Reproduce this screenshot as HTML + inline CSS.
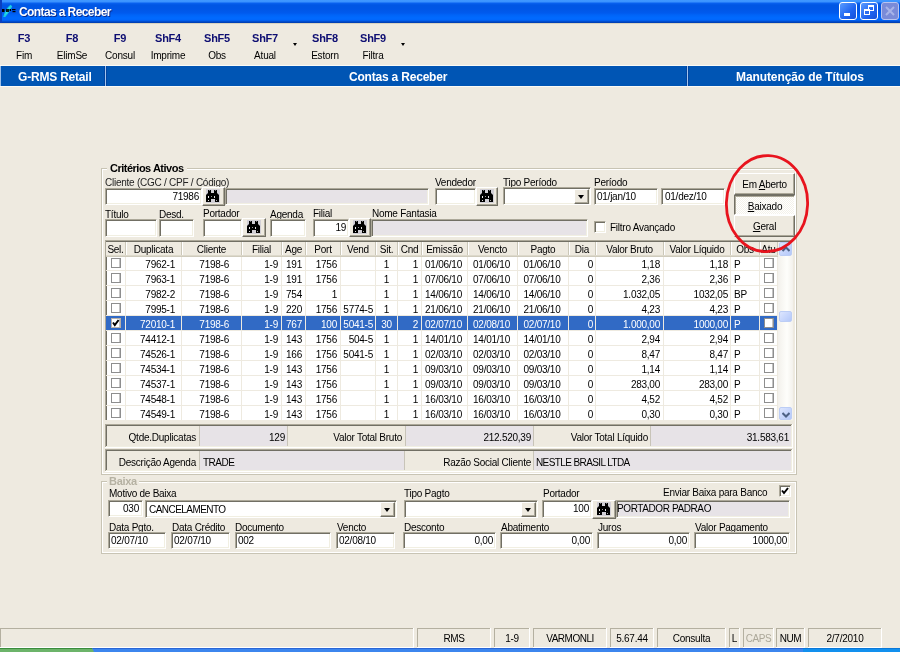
<!DOCTYPE html>
<html><head><meta charset="utf-8"><style>
*{margin:0;padding:0;box-sizing:border-box}
html,body{width:900px;height:652px;overflow:hidden;background:#EEEAE0;font-family:"Liberation Sans",sans-serif;font-size:10px;color:#000;position:relative}
.a{position:absolute}
.t{white-space:nowrap;line-height:12px;letter-spacing:-0.25px}
.sk{border-style:solid;border-width:1px;border-color:#ACA899 #fff #fff #ACA899;box-shadow:inset 1px 1px 0 #716F64,inset -1px -1px 0 #F1EFE2}
.rs{border-style:solid;border-width:1px;border-color:#fff #716F64 #716F64 #fff;box-shadow:inset -1px -1px 0 #ACA899}
.cb{width:10px;height:10px;border:1px solid #8E8E8E;box-shadow:inset -1px 0 0 #C4C4C4}
.arr{width:0;height:0;border-left:3.5px solid transparent;border-right:3.5px solid transparent;border-top:4px solid #000}
.gb{border:1px solid #ACA899;box-shadow:inset 1px 1px 0 #fff,1px 1px 0 #fff}
.g{font-size:10px}
</style></head><body>
<div class="a" style="left:0;top:0;width:900px;height:652px;will-change:transform">
<div class="a" style="left:0;top:0;width:900px;height:23px;background:linear-gradient(#4098FF 0,#3A92FF 2px,#0A62F0 3px,#0056E4 5px,#0056E6 9px,#005AEE 13px,#0064F8 15px,#006AFF 18px,#0066FC 20px,#0056E0 21px,#0044BC 22px,#003CB0 23px)"></div>
<div class="a" style="left:0;top:0;width:2px;height:23px;background:#0A3FC0"></div>
<svg class="a" style="left:0;top:0" width="18" height="20" viewBox="0 0 18 20"><path d="M4 16.5C5 13 7 8 10.5 5.5L11.5 6.5C10 10 7 14 5 16.5z" fill="#30E8F0" stroke="#18C8E0" stroke-width="1.2"/><rect x="2" y="9" width="2.5" height="3" fill="#000"/><path d="M6 9h3v3H6z" fill="#000" opacity="0.85"/><rect x="9.5" y="9" width="1.5" height="2" fill="#000"/><rect x="12" y="9" width="3.5" height="1.2" fill="#000"/><rect x="12.5" y="11" width="3" height="1.2" fill="#000"/></svg>
<div class="a t" style="left:19px;top:6px;font-size:12px;font-weight:bold;color:#fff;letter-spacing:-0.6px;text-shadow:1px 1px 0 #0A2A8A;">Contas a Receber</div>
<div class="a" style="left:839px;top:2px;width:18px;height:18px;border:1px solid #fff;border-radius:3px;background:linear-gradient(135deg,#5A9CFF,#1E64F0 60%,#1650D8)"></div>
<div class="a" style="left:844px;top:13px;width:6px;height:3px;background:#fff;"></div>
<div class="a" style="left:860px;top:2px;width:18px;height:18px;border:1px solid #fff;border-radius:3px;background:linear-gradient(135deg,#5A9CFF,#1E64F0 60%,#1650D8)"></div>
<div class="a" style="left:868px;top:5px;width:6px;height:6px;border:1px solid #fff;border-top-width:2px"></div>
<div class="a" style="left:864px;top:9px;width:6px;height:6px;border:1px solid #fff;border-top-width:2px;background:#2A6CF0"></div>
<div class="a" style="left:881px;top:2px;width:18px;height:18px;border:1px solid #B8C4F0;border-radius:3px;background:#7A8BD8"></div>
<svg class="a" style="left:885px;top:6px" width="10" height="10" viewBox="0 0 10 10"><path d="M1 1L9 9M9 1L1 9" stroke="#A8B4E8" stroke-width="2"/></svg>
<div class="a" style="left:0px;top:23px;width:900px;height:1px;background:#D8D3C0;"></div>
<div class="a t" style="left:-6.0px;width:60px;top:32px;font-size:11px;text-align:center;font-weight:bold;color:#0E0E72;">F3</div>
<div class="a t" style="left:-6.0px;width:60px;top:50px;font-size:10px;text-align:center;letter-spacing:-0.2px;">Fim</div>
<div class="a t" style="left:42.0px;width:60px;top:32px;font-size:11px;text-align:center;font-weight:bold;color:#0E0E72;">F8</div>
<div class="a t" style="left:42.0px;width:60px;top:50px;font-size:10px;text-align:center;letter-spacing:-0.2px;">ElimSe</div>
<div class="a t" style="left:90.0px;width:60px;top:32px;font-size:11px;text-align:center;font-weight:bold;color:#0E0E72;">F9</div>
<div class="a t" style="left:90.0px;width:60px;top:50px;font-size:10px;text-align:center;letter-spacing:-0.2px;">Consul</div>
<div class="a t" style="left:138.0px;width:60px;top:32px;font-size:11px;text-align:center;font-weight:bold;color:#0E0E72;">ShF4</div>
<div class="a t" style="left:138.0px;width:60px;top:50px;font-size:10px;text-align:center;letter-spacing:-0.2px;">Imprime</div>
<div class="a t" style="left:187.0px;width:60px;top:32px;font-size:11px;text-align:center;font-weight:bold;color:#0E0E72;">ShF5</div>
<div class="a t" style="left:187.0px;width:60px;top:50px;font-size:10px;text-align:center;letter-spacing:-0.2px;">Obs</div>
<div class="a t" style="left:235.0px;width:60px;top:32px;font-size:11px;text-align:center;font-weight:bold;color:#0E0E72;">ShF7</div>
<div class="a t" style="left:235.0px;width:60px;top:50px;font-size:10px;text-align:center;letter-spacing:-0.2px;">Atual</div>
<div class="a t" style="left:295.0px;width:60px;top:32px;font-size:11px;text-align:center;font-weight:bold;color:#0E0E72;">ShF8</div>
<div class="a t" style="left:295.0px;width:60px;top:50px;font-size:10px;text-align:center;letter-spacing:-0.2px;">Estorn</div>
<div class="a t" style="left:343.0px;width:60px;top:32px;font-size:11px;text-align:center;font-weight:bold;color:#0E0E72;">ShF9</div>
<div class="a t" style="left:343.0px;width:60px;top:50px;font-size:10px;text-align:center;letter-spacing:-0.2px;">Filtra</div>
<div class="a arr" style="left:292.5px;top:43px;border-left-width:2.5px;border-right-width:2.5px;border-top-width:3px"></div>
<div class="a arr" style="left:400.5px;top:43px;border-left-width:2.5px;border-right-width:2.5px;border-top-width:3px"></div>
<div class="a" style="left:0px;top:65px;width:900px;height:1px;background:#FBFAF5;"></div>
<div class="a" style="left:0px;top:86px;width:900px;height:1px;background:#FBFAF5;"></div>
<div class="a" style="left:0px;top:66px;width:900px;height:20px;background:#0055B4;"></div>
<div class="a" style="left:0px;top:66px;width:1px;height:20px;background:#9CC0EA;"></div>
<div class="a" style="left:104px;top:66px;width:1px;height:20px;background:#0044A0;"></div>
<div class="a" style="left:105px;top:66px;width:1px;height:20px;background:#A4C4EC;"></div>
<div class="a" style="left:106px;top:66px;width:1px;height:20px;background:#0044A0;"></div>
<div class="a" style="left:686px;top:66px;width:1px;height:20px;background:#0044A0;"></div>
<div class="a" style="left:687px;top:66px;width:1px;height:20px;background:#A4C4EC;"></div>
<div class="a" style="left:688px;top:66px;width:1px;height:20px;background:#0044A0;"></div>
<div class="a t" style="left:18px;top:71px;font-size:12px;font-weight:bold;color:#fff;letter-spacing:-0.2px;">G-RMS Retail</div>
<div class="a t" style="left:349px;top:71px;font-size:12px;font-weight:bold;color:#fff;letter-spacing:-0.2px;">Contas a Receber</div>
<div class="a t" style="left:736px;top:71px;font-size:12px;font-weight:bold;color:#fff;letter-spacing:-0.1px;">Manutenção de Títulos</div>
<div class="a" style="left:101px;top:168px;width:696px;height:1px;background:#C8C4B4;"></div>
<div class="a" style="left:102px;top:169px;width:694px;height:1px;background:#fff;"></div>
<div class="a" style="left:101px;top:168px;width:1px;height:307px;background:#C8C4B4;"></div>
<div class="a" style="left:102px;top:169px;width:1px;height:305px;background:#fff;"></div>
<div class="a" style="left:796px;top:168px;width:1px;height:307px;background:#C8C4B4;"></div>
<div class="a" style="left:795px;top:169px;width:1px;height:305px;background:#fff;"></div>
<div class="a" style="left:101px;top:474px;width:696px;height:1px;background:#C8C4B4;"></div>
<div class="a" style="left:102px;top:473px;width:694px;height:1px;background:#fff;"></div>
<div class="a" style="left:107px;top:162px;width:80px;height:10px;background:#EEEAE0;"></div>
<div class="a t" style="left:110px;top:162px;font-size:11px;font-weight:bold;letter-spacing:-0.5px;">Critérios Ativos</div>
<div class="a t" style="left:105px;top:177px;font-size:10px;color:#222;">Cliente (CGC / CPF / Código)</div>
<div class="a t" style="left:435px;top:177px;font-size:10px;">Vendedor</div>
<div class="a t" style="left:503px;top:177px;font-size:10px;">Tipo Período</div>
<div class="a t" style="left:594px;top:177px;font-size:10px;">Período</div>
<div class="a sk" style="left:105px;top:188px;width:97px;height:17px;background:#fff"></div>
<div class="a t" style="right:701px;top:191px;font-size:10px;text-align:right;">71986</div>
<div class="a rs" style="left:202px;top:187px;width:23px;height:19px;background:#EEEAE0;"></div>
<svg class="a" style="left:206px;top:189px" width="14" height="14" viewBox="0 0 14 14">
<rect width="14" height="14" fill="#D2D0D6"/>
<path d="M2 1h3v3h3V1h3v3l2 2v7H9v-3H5v3H0V6l2-2z" fill="#000"/>
<rect x="2" y="7" width="1" height="2" fill="#eee"/><rect x="2" y="11" width="1" height="1" fill="#ddd"/>
<rect x="5" y="7" width="1" height="1" fill="#999"/><rect x="8" y="7" width="1" height="2" fill="#ddd"/><rect x="10" y="11" width="1" height="1" fill="#aaa"/>
<rect x="3" y="1" width="1" height="1" fill="#777"/><rect x="9" y="1" width="1" height="1" fill="#777"/></svg>
<div class="a sk" style="left:225px;top:188px;width:204px;height:17px;background:#E7E3E7"></div>
<div class="a sk" style="left:435px;top:188px;width:41px;height:17px;background:#fff"></div>
<div class="a rs" style="left:476px;top:187px;width:22px;height:19px;background:#EEEAE0;"></div>
<svg class="a" style="left:480px;top:189px" width="14" height="14" viewBox="0 0 14 14">
<rect width="14" height="14" fill="#D2D0D6"/>
<path d="M2 1h3v3h3V1h3v3l2 2v7H9v-3H5v3H0V6l2-2z" fill="#000"/>
<rect x="2" y="7" width="1" height="2" fill="#eee"/><rect x="2" y="11" width="1" height="1" fill="#ddd"/>
<rect x="5" y="7" width="1" height="1" fill="#999"/><rect x="8" y="7" width="1" height="2" fill="#ddd"/><rect x="10" y="11" width="1" height="1" fill="#aaa"/>
<rect x="3" y="1" width="1" height="1" fill="#777"/><rect x="9" y="1" width="1" height="1" fill="#777"/></svg>
<div class="a sk" style="left:503px;top:187px;width:88px;height:18px;background:#fff"></div>
<div class="a rs" style="left:574px;top:189px;width:15px;height:15px;background:#EEEAE0;"></div>
<div class="a arr" style="left:577.5px;top:195px"></div>
<div class="a sk" style="left:594px;top:188px;width:64px;height:17px;background:#fff"></div>
<div class="a t" style="left:597px;top:191px;font-size:10px;">01/jan/10</div>
<div class="a sk" style="left:661px;top:188px;width:64px;height:17px;background:#fff"></div>
<div class="a t" style="left:665px;top:191px;font-size:10px;">01/dez/10</div>
<div class="a t" style="left:105px;top:209px;font-size:10px;">Título</div>
<div class="a t" style="left:159px;top:209px;font-size:10px;">Desd.</div>
<div class="a t" style="left:203px;top:208px;font-size:10px;">Portador</div>
<div class="a t" style="left:270px;top:209px;font-size:10px;">Agenda</div>
<div class="a t" style="left:313px;top:208px;font-size:10px;">Filial</div>
<div class="a t" style="left:372px;top:208px;font-size:10px;">Nome Fantasia</div>
<div class="a sk" style="left:105px;top:219px;width:52px;height:18px;background:#fff"></div>
<div class="a sk" style="left:159px;top:219px;width:35px;height:18px;background:#fff"></div>
<div class="a sk" style="left:203px;top:219px;width:39px;height:18px;background:#fff"></div>
<div class="a rs" style="left:242px;top:218px;width:24px;height:19px;background:#EEEAE0;"></div>
<svg class="a" style="left:247px;top:220px" width="14" height="14" viewBox="0 0 14 14">
<rect width="14" height="14" fill="#D2D0D6"/>
<path d="M2 1h3v3h3V1h3v3l2 2v7H9v-3H5v3H0V6l2-2z" fill="#000"/>
<rect x="2" y="7" width="1" height="2" fill="#eee"/><rect x="2" y="11" width="1" height="1" fill="#ddd"/>
<rect x="5" y="7" width="1" height="1" fill="#999"/><rect x="8" y="7" width="1" height="2" fill="#ddd"/><rect x="10" y="11" width="1" height="1" fill="#aaa"/>
<rect x="3" y="1" width="1" height="1" fill="#777"/><rect x="9" y="1" width="1" height="1" fill="#777"/></svg>
<div class="a sk" style="left:270px;top:219px;width:36px;height:18px;background:#fff"></div>
<div class="a sk" style="left:313px;top:219px;width:36px;height:18px;background:#fff"></div>
<div class="a t" style="right:554px;top:222px;font-size:10px;text-align:right;">19</div>
<div class="a rs" style="left:349px;top:218px;width:22px;height:19px;background:#EEEAE0;"></div>
<svg class="a" style="left:353px;top:220px" width="14" height="14" viewBox="0 0 14 14">
<rect width="14" height="14" fill="#D2D0D6"/>
<path d="M2 1h3v3h3V1h3v3l2 2v7H9v-3H5v3H0V6l2-2z" fill="#000"/>
<rect x="2" y="7" width="1" height="2" fill="#eee"/><rect x="2" y="11" width="1" height="1" fill="#ddd"/>
<rect x="5" y="7" width="1" height="1" fill="#999"/><rect x="8" y="7" width="1" height="2" fill="#ddd"/><rect x="10" y="11" width="1" height="1" fill="#aaa"/>
<rect x="3" y="1" width="1" height="1" fill="#777"/><rect x="9" y="1" width="1" height="1" fill="#777"/></svg>
<div class="a sk" style="left:371px;top:219px;width:217px;height:18px;background:#E7E3E7"></div>
<div class="a sk" style="left:594px;top:221px;width:12px;height:12px;background:#fff"></div>
<div class="a t" style="left:610px;top:222px;font-size:10px;">Filtro Avançado</div>
<div class="a rs" style="left:734px;top:173px;width:61px;height:22px;background:#EEEAE0;"></div>
<div class="a t" style="left:734.5px;width:60px;top:179px;font-size:10px;text-align:center;">Em <u>A</u>berto</div>
<div class="a" style="left:734px;top:195px;width:61px;height:20px;border-style:solid;border-width:1px;border-color:#716F64 #fff #fff #716F64;box-shadow:inset 1px 1px 0 #ACA899;background:repeating-conic-gradient(#F4F2EA 0 25%,#fff 0 50%) 0 0/2px 2px"></div>
<div class="a t" style="left:735.0px;width:60px;top:201px;font-size:10px;text-align:center;"><u>B</u>aixado</div>
<div class="a rs" style="left:734px;top:215px;width:61px;height:22px;background:#EEEAE0;"></div>
<div class="a t" style="left:734.5px;width:60px;top:221px;font-size:10px;text-align:center;"><u>G</u>eral</div>
<div class="a" style="left:105px;top:240px;width:688px;height:181px;background:#fff;"></div>
<div class="a" style="left:105px;top:240px;width:688px;height:1px;background:#ACA899;"></div>
<div class="a" style="left:105px;top:240px;width:1px;height:181px;background:#ACA899;"></div>
<div class="a" style="left:106px;top:241px;width:687px;height:1px;background:#716F64;"></div>
<div class="a" style="left:106px;top:241px;width:1px;height:180px;background:#716F64;"></div>
<div class="a" style="left:105px;top:420px;width:688px;height:1px;background:#F1EFE2;"></div>
<div class="a" style="left:792px;top:240px;width:1px;height:181px;background:#F1EFE2;"></div>
<div class="a" style="left:106px;top:242px;width:672px;height:14px;background:#EEEAE0;"></div>
<div class="a" style="left:125px;top:242px;width:1px;height:14px;background:#CBC7B8;"></div>
<div class="a t" style="left:96.0px;width:39px;top:244px;font-size:10px;text-align:center;">Sel.</div>
<div class="a" style="left:181px;top:242px;width:1px;height:14px;background:#CBC7B8;"></div>
<div class="a" style="left:126px;top:242px;width:1px;height:14px;background:#FFFFFF;"></div>
<div class="a t" style="left:116.0px;width:75px;top:244px;font-size:10px;text-align:center;">Duplicata</div>
<div class="a" style="left:241px;top:242px;width:1px;height:14px;background:#CBC7B8;"></div>
<div class="a" style="left:182px;top:242px;width:1px;height:14px;background:#FFFFFF;"></div>
<div class="a t" style="left:172.0px;width:79px;top:244px;font-size:10px;text-align:center;">Cliente</div>
<div class="a" style="left:281px;top:242px;width:1px;height:14px;background:#CBC7B8;"></div>
<div class="a" style="left:242px;top:242px;width:1px;height:14px;background:#FFFFFF;"></div>
<div class="a t" style="left:232.0px;width:59px;top:244px;font-size:10px;text-align:center;">Filial</div>
<div class="a" style="left:305px;top:242px;width:1px;height:14px;background:#CBC7B8;"></div>
<div class="a" style="left:282px;top:242px;width:1px;height:14px;background:#FFFFFF;"></div>
<div class="a t" style="left:272.0px;width:43px;top:244px;font-size:10px;text-align:center;">Age</div>
<div class="a" style="left:340px;top:242px;width:1px;height:14px;background:#CBC7B8;"></div>
<div class="a" style="left:306px;top:242px;width:1px;height:14px;background:#FFFFFF;"></div>
<div class="a t" style="left:296.0px;width:54px;top:244px;font-size:10px;text-align:center;">Port</div>
<div class="a" style="left:375px;top:242px;width:1px;height:14px;background:#CBC7B8;"></div>
<div class="a" style="left:341px;top:242px;width:1px;height:14px;background:#FFFFFF;"></div>
<div class="a t" style="left:331.0px;width:54px;top:244px;font-size:10px;text-align:center;">Vend</div>
<div class="a" style="left:397px;top:242px;width:1px;height:14px;background:#CBC7B8;"></div>
<div class="a" style="left:376px;top:242px;width:1px;height:14px;background:#FFFFFF;"></div>
<div class="a t" style="left:366.0px;width:41px;top:244px;font-size:10px;text-align:center;">Sit.</div>
<div class="a" style="left:421px;top:242px;width:1px;height:14px;background:#CBC7B8;"></div>
<div class="a" style="left:398px;top:242px;width:1px;height:14px;background:#FFFFFF;"></div>
<div class="a t" style="left:388.0px;width:43px;top:244px;font-size:10px;text-align:center;">Cnd</div>
<div class="a" style="left:467px;top:242px;width:1px;height:14px;background:#CBC7B8;"></div>
<div class="a" style="left:422px;top:242px;width:1px;height:14px;background:#FFFFFF;"></div>
<div class="a t" style="left:412.0px;width:65px;top:244px;font-size:10px;text-align:center;">Emissão</div>
<div class="a" style="left:517px;top:242px;width:1px;height:14px;background:#CBC7B8;"></div>
<div class="a" style="left:468px;top:242px;width:1px;height:14px;background:#FFFFFF;"></div>
<div class="a t" style="left:458.0px;width:69px;top:244px;font-size:10px;text-align:center;">Vencto</div>
<div class="a" style="left:568px;top:242px;width:1px;height:14px;background:#CBC7B8;"></div>
<div class="a" style="left:518px;top:242px;width:1px;height:14px;background:#FFFFFF;"></div>
<div class="a t" style="left:508.0px;width:70px;top:244px;font-size:10px;text-align:center;">Pagto</div>
<div class="a" style="left:595px;top:242px;width:1px;height:14px;background:#CBC7B8;"></div>
<div class="a" style="left:569px;top:242px;width:1px;height:14px;background:#FFFFFF;"></div>
<div class="a t" style="left:559.0px;width:46px;top:244px;font-size:10px;text-align:center;">Dia</div>
<div class="a" style="left:663px;top:242px;width:1px;height:14px;background:#CBC7B8;"></div>
<div class="a" style="left:596px;top:242px;width:1px;height:14px;background:#FFFFFF;"></div>
<div class="a t" style="left:586.0px;width:87px;top:244px;font-size:10px;text-align:center;">Valor Bruto</div>
<div class="a" style="left:730px;top:242px;width:1px;height:14px;background:#CBC7B8;"></div>
<div class="a" style="left:664px;top:242px;width:1px;height:14px;background:#FFFFFF;"></div>
<div class="a t" style="left:654.0px;width:86px;top:244px;font-size:10px;text-align:center;">Valor Líquido</div>
<div class="a" style="left:759px;top:242px;width:1px;height:14px;background:#CBC7B8;"></div>
<div class="a" style="left:731px;top:242px;width:1px;height:14px;background:#FFFFFF;"></div>
<div class="a t" style="left:721.0px;width:48px;top:244px;font-size:10px;text-align:center;">Obs</div>
<div class="a" style="left:777px;top:242px;width:1px;height:14px;background:#CBC7B8;"></div>
<div class="a" style="left:760px;top:242px;width:1px;height:14px;background:#FFFFFF;"></div>
<div class="a t" style="left:750.0px;width:37px;top:244px;font-size:10px;text-align:center;">Atu</div>
<div class="a" style="left:106px;top:255px;width:672px;height:1px;background:#DDD9CB;"></div>
<div class="a" style="left:106px;top:270px;width:672px;height:1px;background:#EEEAE0;"></div>
<div class="a" style="left:125px;top:256px;width:1px;height:15px;background:#EEEAE0;"></div>
<div class="a" style="left:181px;top:256px;width:1px;height:15px;background:#EEEAE0;"></div>
<div class="a" style="left:241px;top:256px;width:1px;height:15px;background:#EEEAE0;"></div>
<div class="a" style="left:281px;top:256px;width:1px;height:15px;background:#EEEAE0;"></div>
<div class="a" style="left:305px;top:256px;width:1px;height:15px;background:#EEEAE0;"></div>
<div class="a" style="left:340px;top:256px;width:1px;height:15px;background:#EEEAE0;"></div>
<div class="a" style="left:375px;top:256px;width:1px;height:15px;background:#EEEAE0;"></div>
<div class="a" style="left:397px;top:256px;width:1px;height:15px;background:#EEEAE0;"></div>
<div class="a" style="left:421px;top:256px;width:1px;height:15px;background:#EEEAE0;"></div>
<div class="a" style="left:467px;top:256px;width:1px;height:15px;background:#EEEAE0;"></div>
<div class="a" style="left:517px;top:256px;width:1px;height:15px;background:#EEEAE0;"></div>
<div class="a" style="left:568px;top:256px;width:1px;height:15px;background:#EEEAE0;"></div>
<div class="a" style="left:595px;top:256px;width:1px;height:15px;background:#EEEAE0;"></div>
<div class="a" style="left:663px;top:256px;width:1px;height:15px;background:#EEEAE0;"></div>
<div class="a" style="left:730px;top:256px;width:1px;height:15px;background:#EEEAE0;"></div>
<div class="a" style="left:759px;top:256px;width:1px;height:15px;background:#EEEAE0;"></div>
<div class="a" style="left:777px;top:256px;width:1px;height:15px;background:#EEEAE0;"></div>
<div class="a cb" style="left:111px;top:258px;background:#fff;border-color:#8E8E8E"></div>
<div class="a cb" style="left:764px;top:258px;background:#fff;border-color:#8E8E8E"></div>
<div class="a t" style="right:725px;top:259px;font-size:10px;text-align:right;color:#000;">7962-1</div>
<div class="a t" style="right:671px;top:259px;font-size:10px;text-align:right;color:#000;">7198-6</div>
<div class="a t" style="right:622px;top:259px;font-size:10px;text-align:right;color:#000;">1-9</div>
<div class="a t" style="right:598px;top:259px;font-size:10px;text-align:right;color:#000;">191</div>
<div class="a t" style="right:563px;top:259px;font-size:10px;text-align:right;color:#000;">1756</div>
<div class="a t" style="left:356.5px;width:60px;top:259px;font-size:10px;text-align:center;color:#000;">1</div>
<div class="a t" style="right:482px;top:259px;font-size:10px;text-align:right;color:#000;">1</div>
<div class="a t" style="left:413.5px;width:60px;top:259px;font-size:10px;text-align:center;color:#000;">01/06/10</div>
<div class="a t" style="left:461.5px;width:60px;top:259px;font-size:10px;text-align:center;color:#000;">01/06/10</div>
<div class="a t" style="left:512.0px;width:60px;top:259px;font-size:10px;text-align:center;color:#000;">01/06/10</div>
<div class="a t" style="right:307px;top:259px;font-size:10px;text-align:right;color:#000;">0</div>
<div class="a t" style="right:240px;top:259px;font-size:10px;text-align:right;color:#000;">1,18</div>
<div class="a t" style="right:172px;top:259px;font-size:10px;text-align:right;color:#000;">1,18</div>
<div class="a t" style="left:734px;top:259px;font-size:10px;color:#000;">P</div>
<div class="a" style="left:106px;top:285px;width:672px;height:1px;background:#EEEAE0;"></div>
<div class="a" style="left:125px;top:271px;width:1px;height:15px;background:#EEEAE0;"></div>
<div class="a" style="left:181px;top:271px;width:1px;height:15px;background:#EEEAE0;"></div>
<div class="a" style="left:241px;top:271px;width:1px;height:15px;background:#EEEAE0;"></div>
<div class="a" style="left:281px;top:271px;width:1px;height:15px;background:#EEEAE0;"></div>
<div class="a" style="left:305px;top:271px;width:1px;height:15px;background:#EEEAE0;"></div>
<div class="a" style="left:340px;top:271px;width:1px;height:15px;background:#EEEAE0;"></div>
<div class="a" style="left:375px;top:271px;width:1px;height:15px;background:#EEEAE0;"></div>
<div class="a" style="left:397px;top:271px;width:1px;height:15px;background:#EEEAE0;"></div>
<div class="a" style="left:421px;top:271px;width:1px;height:15px;background:#EEEAE0;"></div>
<div class="a" style="left:467px;top:271px;width:1px;height:15px;background:#EEEAE0;"></div>
<div class="a" style="left:517px;top:271px;width:1px;height:15px;background:#EEEAE0;"></div>
<div class="a" style="left:568px;top:271px;width:1px;height:15px;background:#EEEAE0;"></div>
<div class="a" style="left:595px;top:271px;width:1px;height:15px;background:#EEEAE0;"></div>
<div class="a" style="left:663px;top:271px;width:1px;height:15px;background:#EEEAE0;"></div>
<div class="a" style="left:730px;top:271px;width:1px;height:15px;background:#EEEAE0;"></div>
<div class="a" style="left:759px;top:271px;width:1px;height:15px;background:#EEEAE0;"></div>
<div class="a" style="left:777px;top:271px;width:1px;height:15px;background:#EEEAE0;"></div>
<div class="a cb" style="left:111px;top:273px;background:#fff;border-color:#8E8E8E"></div>
<div class="a cb" style="left:764px;top:273px;background:#fff;border-color:#8E8E8E"></div>
<div class="a t" style="right:725px;top:274px;font-size:10px;text-align:right;color:#000;">7963-1</div>
<div class="a t" style="right:671px;top:274px;font-size:10px;text-align:right;color:#000;">7198-6</div>
<div class="a t" style="right:622px;top:274px;font-size:10px;text-align:right;color:#000;">1-9</div>
<div class="a t" style="right:598px;top:274px;font-size:10px;text-align:right;color:#000;">191</div>
<div class="a t" style="right:563px;top:274px;font-size:10px;text-align:right;color:#000;">1756</div>
<div class="a t" style="left:356.5px;width:60px;top:274px;font-size:10px;text-align:center;color:#000;">1</div>
<div class="a t" style="right:482px;top:274px;font-size:10px;text-align:right;color:#000;">1</div>
<div class="a t" style="left:413.5px;width:60px;top:274px;font-size:10px;text-align:center;color:#000;">07/06/10</div>
<div class="a t" style="left:461.5px;width:60px;top:274px;font-size:10px;text-align:center;color:#000;">07/06/10</div>
<div class="a t" style="left:512.0px;width:60px;top:274px;font-size:10px;text-align:center;color:#000;">07/06/10</div>
<div class="a t" style="right:307px;top:274px;font-size:10px;text-align:right;color:#000;">0</div>
<div class="a t" style="right:240px;top:274px;font-size:10px;text-align:right;color:#000;">2,36</div>
<div class="a t" style="right:172px;top:274px;font-size:10px;text-align:right;color:#000;">2,36</div>
<div class="a t" style="left:734px;top:274px;font-size:10px;color:#000;">P</div>
<div class="a" style="left:106px;top:300px;width:672px;height:1px;background:#EEEAE0;"></div>
<div class="a" style="left:125px;top:286px;width:1px;height:15px;background:#EEEAE0;"></div>
<div class="a" style="left:181px;top:286px;width:1px;height:15px;background:#EEEAE0;"></div>
<div class="a" style="left:241px;top:286px;width:1px;height:15px;background:#EEEAE0;"></div>
<div class="a" style="left:281px;top:286px;width:1px;height:15px;background:#EEEAE0;"></div>
<div class="a" style="left:305px;top:286px;width:1px;height:15px;background:#EEEAE0;"></div>
<div class="a" style="left:340px;top:286px;width:1px;height:15px;background:#EEEAE0;"></div>
<div class="a" style="left:375px;top:286px;width:1px;height:15px;background:#EEEAE0;"></div>
<div class="a" style="left:397px;top:286px;width:1px;height:15px;background:#EEEAE0;"></div>
<div class="a" style="left:421px;top:286px;width:1px;height:15px;background:#EEEAE0;"></div>
<div class="a" style="left:467px;top:286px;width:1px;height:15px;background:#EEEAE0;"></div>
<div class="a" style="left:517px;top:286px;width:1px;height:15px;background:#EEEAE0;"></div>
<div class="a" style="left:568px;top:286px;width:1px;height:15px;background:#EEEAE0;"></div>
<div class="a" style="left:595px;top:286px;width:1px;height:15px;background:#EEEAE0;"></div>
<div class="a" style="left:663px;top:286px;width:1px;height:15px;background:#EEEAE0;"></div>
<div class="a" style="left:730px;top:286px;width:1px;height:15px;background:#EEEAE0;"></div>
<div class="a" style="left:759px;top:286px;width:1px;height:15px;background:#EEEAE0;"></div>
<div class="a" style="left:777px;top:286px;width:1px;height:15px;background:#EEEAE0;"></div>
<div class="a cb" style="left:111px;top:288px;background:#fff;border-color:#8E8E8E"></div>
<div class="a cb" style="left:764px;top:288px;background:#fff;border-color:#8E8E8E"></div>
<div class="a t" style="right:725px;top:289px;font-size:10px;text-align:right;color:#000;">7982-2</div>
<div class="a t" style="right:671px;top:289px;font-size:10px;text-align:right;color:#000;">7198-6</div>
<div class="a t" style="right:622px;top:289px;font-size:10px;text-align:right;color:#000;">1-9</div>
<div class="a t" style="right:598px;top:289px;font-size:10px;text-align:right;color:#000;">754</div>
<div class="a t" style="right:563px;top:289px;font-size:10px;text-align:right;color:#000;">1</div>
<div class="a t" style="left:356.5px;width:60px;top:289px;font-size:10px;text-align:center;color:#000;">1</div>
<div class="a t" style="right:482px;top:289px;font-size:10px;text-align:right;color:#000;">1</div>
<div class="a t" style="left:413.5px;width:60px;top:289px;font-size:10px;text-align:center;color:#000;">14/06/10</div>
<div class="a t" style="left:461.5px;width:60px;top:289px;font-size:10px;text-align:center;color:#000;">14/06/10</div>
<div class="a t" style="left:512.0px;width:60px;top:289px;font-size:10px;text-align:center;color:#000;">14/06/10</div>
<div class="a t" style="right:307px;top:289px;font-size:10px;text-align:right;color:#000;">0</div>
<div class="a t" style="right:240px;top:289px;font-size:10px;text-align:right;color:#000;">1.032,05</div>
<div class="a t" style="right:172px;top:289px;font-size:10px;text-align:right;color:#000;">1032,05</div>
<div class="a t" style="left:734px;top:289px;font-size:10px;color:#000;">BP</div>
<div class="a" style="left:106px;top:315px;width:672px;height:1px;background:#EEEAE0;"></div>
<div class="a" style="left:125px;top:301px;width:1px;height:15px;background:#EEEAE0;"></div>
<div class="a" style="left:181px;top:301px;width:1px;height:15px;background:#EEEAE0;"></div>
<div class="a" style="left:241px;top:301px;width:1px;height:15px;background:#EEEAE0;"></div>
<div class="a" style="left:281px;top:301px;width:1px;height:15px;background:#EEEAE0;"></div>
<div class="a" style="left:305px;top:301px;width:1px;height:15px;background:#EEEAE0;"></div>
<div class="a" style="left:340px;top:301px;width:1px;height:15px;background:#EEEAE0;"></div>
<div class="a" style="left:375px;top:301px;width:1px;height:15px;background:#EEEAE0;"></div>
<div class="a" style="left:397px;top:301px;width:1px;height:15px;background:#EEEAE0;"></div>
<div class="a" style="left:421px;top:301px;width:1px;height:15px;background:#EEEAE0;"></div>
<div class="a" style="left:467px;top:301px;width:1px;height:15px;background:#EEEAE0;"></div>
<div class="a" style="left:517px;top:301px;width:1px;height:15px;background:#EEEAE0;"></div>
<div class="a" style="left:568px;top:301px;width:1px;height:15px;background:#EEEAE0;"></div>
<div class="a" style="left:595px;top:301px;width:1px;height:15px;background:#EEEAE0;"></div>
<div class="a" style="left:663px;top:301px;width:1px;height:15px;background:#EEEAE0;"></div>
<div class="a" style="left:730px;top:301px;width:1px;height:15px;background:#EEEAE0;"></div>
<div class="a" style="left:759px;top:301px;width:1px;height:15px;background:#EEEAE0;"></div>
<div class="a" style="left:777px;top:301px;width:1px;height:15px;background:#EEEAE0;"></div>
<div class="a cb" style="left:111px;top:303px;background:#fff;border-color:#8E8E8E"></div>
<div class="a cb" style="left:764px;top:303px;background:#fff;border-color:#8E8E8E"></div>
<div class="a t" style="right:725px;top:304px;font-size:10px;text-align:right;color:#000;">7995-1</div>
<div class="a t" style="right:671px;top:304px;font-size:10px;text-align:right;color:#000;">7198-6</div>
<div class="a t" style="right:622px;top:304px;font-size:10px;text-align:right;color:#000;">1-9</div>
<div class="a t" style="right:598px;top:304px;font-size:10px;text-align:right;color:#000;">220</div>
<div class="a t" style="right:563px;top:304px;font-size:10px;text-align:right;color:#000;">1756</div>
<div class="a t" style="right:527px;top:304px;font-size:10px;text-align:right;color:#000;">5774-5</div>
<div class="a t" style="left:356.5px;width:60px;top:304px;font-size:10px;text-align:center;color:#000;">1</div>
<div class="a t" style="right:482px;top:304px;font-size:10px;text-align:right;color:#000;">1</div>
<div class="a t" style="left:413.5px;width:60px;top:304px;font-size:10px;text-align:center;color:#000;">21/06/10</div>
<div class="a t" style="left:461.5px;width:60px;top:304px;font-size:10px;text-align:center;color:#000;">21/06/10</div>
<div class="a t" style="left:512.0px;width:60px;top:304px;font-size:10px;text-align:center;color:#000;">21/06/10</div>
<div class="a t" style="right:307px;top:304px;font-size:10px;text-align:right;color:#000;">0</div>
<div class="a t" style="right:240px;top:304px;font-size:10px;text-align:right;color:#000;">4,23</div>
<div class="a t" style="right:172px;top:304px;font-size:10px;text-align:right;color:#000;">4,23</div>
<div class="a t" style="left:734px;top:304px;font-size:10px;color:#000;">P</div>
<div class="a" style="left:106px;top:316px;width:19px;height:14px;background:#316AC5;"></div>
<div class="a" style="left:126px;top:316px;width:652px;height:14px;background:#316AC5;"></div>
<div class="a" style="left:106px;top:330px;width:672px;height:1px;background:#EEEAE0;"></div>
<div class="a" style="left:125px;top:316px;width:1px;height:15px;background:#EEEAE0;"></div>
<div class="a" style="left:181px;top:316px;width:1px;height:15px;background:#EEEAE0;"></div>
<div class="a" style="left:241px;top:316px;width:1px;height:15px;background:#EEEAE0;"></div>
<div class="a" style="left:281px;top:316px;width:1px;height:15px;background:#EEEAE0;"></div>
<div class="a" style="left:305px;top:316px;width:1px;height:15px;background:#EEEAE0;"></div>
<div class="a" style="left:340px;top:316px;width:1px;height:15px;background:#EEEAE0;"></div>
<div class="a" style="left:375px;top:316px;width:1px;height:15px;background:#EEEAE0;"></div>
<div class="a" style="left:397px;top:316px;width:1px;height:15px;background:#EEEAE0;"></div>
<div class="a" style="left:421px;top:316px;width:1px;height:15px;background:#EEEAE0;"></div>
<div class="a" style="left:467px;top:316px;width:1px;height:15px;background:#EEEAE0;"></div>
<div class="a" style="left:517px;top:316px;width:1px;height:15px;background:#EEEAE0;"></div>
<div class="a" style="left:568px;top:316px;width:1px;height:15px;background:#EEEAE0;"></div>
<div class="a" style="left:595px;top:316px;width:1px;height:15px;background:#EEEAE0;"></div>
<div class="a" style="left:663px;top:316px;width:1px;height:15px;background:#EEEAE0;"></div>
<div class="a" style="left:730px;top:316px;width:1px;height:15px;background:#EEEAE0;"></div>
<div class="a" style="left:759px;top:316px;width:1px;height:15px;background:#EEEAE0;"></div>
<div class="a" style="left:777px;top:316px;width:1px;height:15px;background:#EEEAE0;"></div>
<div class="a cb" style="left:111px;top:318px;background:#fff;border-color:#B8B0A8"></div>
<svg class="a" style="left:111px;top:318px" width="10" height="10" viewBox="0 0 10 10"><path d="M2 4.5L3.8 7 7.6 2" stroke="#000" stroke-width="2" fill="none"/></svg>
<div class="a cb" style="left:764px;top:318px;background:#fff;border-color:#8E8E8E"></div>
<div class="a t" style="right:725px;top:319px;font-size:10px;text-align:right;color:#fff;">72010-1</div>
<div class="a t" style="right:671px;top:319px;font-size:10px;text-align:right;color:#fff;">7198-6</div>
<div class="a t" style="right:622px;top:319px;font-size:10px;text-align:right;color:#fff;">1-9</div>
<div class="a t" style="right:598px;top:319px;font-size:10px;text-align:right;color:#fff;">767</div>
<div class="a t" style="right:563px;top:319px;font-size:10px;text-align:right;color:#fff;">100</div>
<div class="a t" style="right:527px;top:319px;font-size:10px;text-align:right;color:#fff;">5041-5</div>
<div class="a t" style="left:356.5px;width:60px;top:319px;font-size:10px;text-align:center;color:#fff;">30</div>
<div class="a t" style="right:482px;top:319px;font-size:10px;text-align:right;color:#fff;">2</div>
<div class="a t" style="left:413.5px;width:60px;top:319px;font-size:10px;text-align:center;color:#fff;">02/07/10</div>
<div class="a t" style="left:461.5px;width:60px;top:319px;font-size:10px;text-align:center;color:#fff;">02/08/10</div>
<div class="a t" style="left:512.0px;width:60px;top:319px;font-size:10px;text-align:center;color:#fff;">02/07/10</div>
<div class="a t" style="right:307px;top:319px;font-size:10px;text-align:right;color:#fff;">0</div>
<div class="a t" style="right:240px;top:319px;font-size:10px;text-align:right;color:#fff;">1.000,00</div>
<div class="a t" style="right:172px;top:319px;font-size:10px;text-align:right;color:#fff;">1000,00</div>
<div class="a t" style="left:734px;top:319px;font-size:10px;color:#fff;">P</div>
<div class="a" style="left:106px;top:345px;width:672px;height:1px;background:#EEEAE0;"></div>
<div class="a" style="left:125px;top:331px;width:1px;height:15px;background:#EEEAE0;"></div>
<div class="a" style="left:181px;top:331px;width:1px;height:15px;background:#EEEAE0;"></div>
<div class="a" style="left:241px;top:331px;width:1px;height:15px;background:#EEEAE0;"></div>
<div class="a" style="left:281px;top:331px;width:1px;height:15px;background:#EEEAE0;"></div>
<div class="a" style="left:305px;top:331px;width:1px;height:15px;background:#EEEAE0;"></div>
<div class="a" style="left:340px;top:331px;width:1px;height:15px;background:#EEEAE0;"></div>
<div class="a" style="left:375px;top:331px;width:1px;height:15px;background:#EEEAE0;"></div>
<div class="a" style="left:397px;top:331px;width:1px;height:15px;background:#EEEAE0;"></div>
<div class="a" style="left:421px;top:331px;width:1px;height:15px;background:#EEEAE0;"></div>
<div class="a" style="left:467px;top:331px;width:1px;height:15px;background:#EEEAE0;"></div>
<div class="a" style="left:517px;top:331px;width:1px;height:15px;background:#EEEAE0;"></div>
<div class="a" style="left:568px;top:331px;width:1px;height:15px;background:#EEEAE0;"></div>
<div class="a" style="left:595px;top:331px;width:1px;height:15px;background:#EEEAE0;"></div>
<div class="a" style="left:663px;top:331px;width:1px;height:15px;background:#EEEAE0;"></div>
<div class="a" style="left:730px;top:331px;width:1px;height:15px;background:#EEEAE0;"></div>
<div class="a" style="left:759px;top:331px;width:1px;height:15px;background:#EEEAE0;"></div>
<div class="a" style="left:777px;top:331px;width:1px;height:15px;background:#EEEAE0;"></div>
<div class="a cb" style="left:111px;top:333px;background:#fff;border-color:#8E8E8E"></div>
<div class="a cb" style="left:764px;top:333px;background:#fff;border-color:#8E8E8E"></div>
<div class="a t" style="right:725px;top:334px;font-size:10px;text-align:right;color:#000;">74412-1</div>
<div class="a t" style="right:671px;top:334px;font-size:10px;text-align:right;color:#000;">7198-6</div>
<div class="a t" style="right:622px;top:334px;font-size:10px;text-align:right;color:#000;">1-9</div>
<div class="a t" style="right:598px;top:334px;font-size:10px;text-align:right;color:#000;">143</div>
<div class="a t" style="right:563px;top:334px;font-size:10px;text-align:right;color:#000;">1756</div>
<div class="a t" style="right:527px;top:334px;font-size:10px;text-align:right;color:#000;">504-5</div>
<div class="a t" style="left:356.5px;width:60px;top:334px;font-size:10px;text-align:center;color:#000;">1</div>
<div class="a t" style="right:482px;top:334px;font-size:10px;text-align:right;color:#000;">1</div>
<div class="a t" style="left:413.5px;width:60px;top:334px;font-size:10px;text-align:center;color:#000;">14/01/10</div>
<div class="a t" style="left:461.5px;width:60px;top:334px;font-size:10px;text-align:center;color:#000;">14/01/10</div>
<div class="a t" style="left:512.0px;width:60px;top:334px;font-size:10px;text-align:center;color:#000;">14/01/10</div>
<div class="a t" style="right:307px;top:334px;font-size:10px;text-align:right;color:#000;">0</div>
<div class="a t" style="right:240px;top:334px;font-size:10px;text-align:right;color:#000;">2,94</div>
<div class="a t" style="right:172px;top:334px;font-size:10px;text-align:right;color:#000;">2,94</div>
<div class="a t" style="left:734px;top:334px;font-size:10px;color:#000;">P</div>
<div class="a" style="left:106px;top:360px;width:672px;height:1px;background:#EEEAE0;"></div>
<div class="a" style="left:125px;top:346px;width:1px;height:15px;background:#EEEAE0;"></div>
<div class="a" style="left:181px;top:346px;width:1px;height:15px;background:#EEEAE0;"></div>
<div class="a" style="left:241px;top:346px;width:1px;height:15px;background:#EEEAE0;"></div>
<div class="a" style="left:281px;top:346px;width:1px;height:15px;background:#EEEAE0;"></div>
<div class="a" style="left:305px;top:346px;width:1px;height:15px;background:#EEEAE0;"></div>
<div class="a" style="left:340px;top:346px;width:1px;height:15px;background:#EEEAE0;"></div>
<div class="a" style="left:375px;top:346px;width:1px;height:15px;background:#EEEAE0;"></div>
<div class="a" style="left:397px;top:346px;width:1px;height:15px;background:#EEEAE0;"></div>
<div class="a" style="left:421px;top:346px;width:1px;height:15px;background:#EEEAE0;"></div>
<div class="a" style="left:467px;top:346px;width:1px;height:15px;background:#EEEAE0;"></div>
<div class="a" style="left:517px;top:346px;width:1px;height:15px;background:#EEEAE0;"></div>
<div class="a" style="left:568px;top:346px;width:1px;height:15px;background:#EEEAE0;"></div>
<div class="a" style="left:595px;top:346px;width:1px;height:15px;background:#EEEAE0;"></div>
<div class="a" style="left:663px;top:346px;width:1px;height:15px;background:#EEEAE0;"></div>
<div class="a" style="left:730px;top:346px;width:1px;height:15px;background:#EEEAE0;"></div>
<div class="a" style="left:759px;top:346px;width:1px;height:15px;background:#EEEAE0;"></div>
<div class="a" style="left:777px;top:346px;width:1px;height:15px;background:#EEEAE0;"></div>
<div class="a cb" style="left:111px;top:348px;background:#fff;border-color:#8E8E8E"></div>
<div class="a cb" style="left:764px;top:348px;background:#fff;border-color:#8E8E8E"></div>
<div class="a t" style="right:725px;top:349px;font-size:10px;text-align:right;color:#000;">74526-1</div>
<div class="a t" style="right:671px;top:349px;font-size:10px;text-align:right;color:#000;">7198-6</div>
<div class="a t" style="right:622px;top:349px;font-size:10px;text-align:right;color:#000;">1-9</div>
<div class="a t" style="right:598px;top:349px;font-size:10px;text-align:right;color:#000;">166</div>
<div class="a t" style="right:563px;top:349px;font-size:10px;text-align:right;color:#000;">1756</div>
<div class="a t" style="right:527px;top:349px;font-size:10px;text-align:right;color:#000;">5041-5</div>
<div class="a t" style="left:356.5px;width:60px;top:349px;font-size:10px;text-align:center;color:#000;">1</div>
<div class="a t" style="right:482px;top:349px;font-size:10px;text-align:right;color:#000;">1</div>
<div class="a t" style="left:413.5px;width:60px;top:349px;font-size:10px;text-align:center;color:#000;">02/03/10</div>
<div class="a t" style="left:461.5px;width:60px;top:349px;font-size:10px;text-align:center;color:#000;">02/03/10</div>
<div class="a t" style="left:512.0px;width:60px;top:349px;font-size:10px;text-align:center;color:#000;">02/03/10</div>
<div class="a t" style="right:307px;top:349px;font-size:10px;text-align:right;color:#000;">0</div>
<div class="a t" style="right:240px;top:349px;font-size:10px;text-align:right;color:#000;">8,47</div>
<div class="a t" style="right:172px;top:349px;font-size:10px;text-align:right;color:#000;">8,47</div>
<div class="a t" style="left:734px;top:349px;font-size:10px;color:#000;">P</div>
<div class="a" style="left:106px;top:375px;width:672px;height:1px;background:#EEEAE0;"></div>
<div class="a" style="left:125px;top:361px;width:1px;height:15px;background:#EEEAE0;"></div>
<div class="a" style="left:181px;top:361px;width:1px;height:15px;background:#EEEAE0;"></div>
<div class="a" style="left:241px;top:361px;width:1px;height:15px;background:#EEEAE0;"></div>
<div class="a" style="left:281px;top:361px;width:1px;height:15px;background:#EEEAE0;"></div>
<div class="a" style="left:305px;top:361px;width:1px;height:15px;background:#EEEAE0;"></div>
<div class="a" style="left:340px;top:361px;width:1px;height:15px;background:#EEEAE0;"></div>
<div class="a" style="left:375px;top:361px;width:1px;height:15px;background:#EEEAE0;"></div>
<div class="a" style="left:397px;top:361px;width:1px;height:15px;background:#EEEAE0;"></div>
<div class="a" style="left:421px;top:361px;width:1px;height:15px;background:#EEEAE0;"></div>
<div class="a" style="left:467px;top:361px;width:1px;height:15px;background:#EEEAE0;"></div>
<div class="a" style="left:517px;top:361px;width:1px;height:15px;background:#EEEAE0;"></div>
<div class="a" style="left:568px;top:361px;width:1px;height:15px;background:#EEEAE0;"></div>
<div class="a" style="left:595px;top:361px;width:1px;height:15px;background:#EEEAE0;"></div>
<div class="a" style="left:663px;top:361px;width:1px;height:15px;background:#EEEAE0;"></div>
<div class="a" style="left:730px;top:361px;width:1px;height:15px;background:#EEEAE0;"></div>
<div class="a" style="left:759px;top:361px;width:1px;height:15px;background:#EEEAE0;"></div>
<div class="a" style="left:777px;top:361px;width:1px;height:15px;background:#EEEAE0;"></div>
<div class="a cb" style="left:111px;top:363px;background:#fff;border-color:#8E8E8E"></div>
<div class="a cb" style="left:764px;top:363px;background:#fff;border-color:#8E8E8E"></div>
<div class="a t" style="right:725px;top:364px;font-size:10px;text-align:right;color:#000;">74534-1</div>
<div class="a t" style="right:671px;top:364px;font-size:10px;text-align:right;color:#000;">7198-6</div>
<div class="a t" style="right:622px;top:364px;font-size:10px;text-align:right;color:#000;">1-9</div>
<div class="a t" style="right:598px;top:364px;font-size:10px;text-align:right;color:#000;">143</div>
<div class="a t" style="right:563px;top:364px;font-size:10px;text-align:right;color:#000;">1756</div>
<div class="a t" style="left:356.5px;width:60px;top:364px;font-size:10px;text-align:center;color:#000;">1</div>
<div class="a t" style="right:482px;top:364px;font-size:10px;text-align:right;color:#000;">1</div>
<div class="a t" style="left:413.5px;width:60px;top:364px;font-size:10px;text-align:center;color:#000;">09/03/10</div>
<div class="a t" style="left:461.5px;width:60px;top:364px;font-size:10px;text-align:center;color:#000;">09/03/10</div>
<div class="a t" style="left:512.0px;width:60px;top:364px;font-size:10px;text-align:center;color:#000;">09/03/10</div>
<div class="a t" style="right:307px;top:364px;font-size:10px;text-align:right;color:#000;">0</div>
<div class="a t" style="right:240px;top:364px;font-size:10px;text-align:right;color:#000;">1,14</div>
<div class="a t" style="right:172px;top:364px;font-size:10px;text-align:right;color:#000;">1,14</div>
<div class="a t" style="left:734px;top:364px;font-size:10px;color:#000;">P</div>
<div class="a" style="left:106px;top:390px;width:672px;height:1px;background:#EEEAE0;"></div>
<div class="a" style="left:125px;top:376px;width:1px;height:15px;background:#EEEAE0;"></div>
<div class="a" style="left:181px;top:376px;width:1px;height:15px;background:#EEEAE0;"></div>
<div class="a" style="left:241px;top:376px;width:1px;height:15px;background:#EEEAE0;"></div>
<div class="a" style="left:281px;top:376px;width:1px;height:15px;background:#EEEAE0;"></div>
<div class="a" style="left:305px;top:376px;width:1px;height:15px;background:#EEEAE0;"></div>
<div class="a" style="left:340px;top:376px;width:1px;height:15px;background:#EEEAE0;"></div>
<div class="a" style="left:375px;top:376px;width:1px;height:15px;background:#EEEAE0;"></div>
<div class="a" style="left:397px;top:376px;width:1px;height:15px;background:#EEEAE0;"></div>
<div class="a" style="left:421px;top:376px;width:1px;height:15px;background:#EEEAE0;"></div>
<div class="a" style="left:467px;top:376px;width:1px;height:15px;background:#EEEAE0;"></div>
<div class="a" style="left:517px;top:376px;width:1px;height:15px;background:#EEEAE0;"></div>
<div class="a" style="left:568px;top:376px;width:1px;height:15px;background:#EEEAE0;"></div>
<div class="a" style="left:595px;top:376px;width:1px;height:15px;background:#EEEAE0;"></div>
<div class="a" style="left:663px;top:376px;width:1px;height:15px;background:#EEEAE0;"></div>
<div class="a" style="left:730px;top:376px;width:1px;height:15px;background:#EEEAE0;"></div>
<div class="a" style="left:759px;top:376px;width:1px;height:15px;background:#EEEAE0;"></div>
<div class="a" style="left:777px;top:376px;width:1px;height:15px;background:#EEEAE0;"></div>
<div class="a cb" style="left:111px;top:378px;background:#fff;border-color:#8E8E8E"></div>
<div class="a cb" style="left:764px;top:378px;background:#fff;border-color:#8E8E8E"></div>
<div class="a t" style="right:725px;top:379px;font-size:10px;text-align:right;color:#000;">74537-1</div>
<div class="a t" style="right:671px;top:379px;font-size:10px;text-align:right;color:#000;">7198-6</div>
<div class="a t" style="right:622px;top:379px;font-size:10px;text-align:right;color:#000;">1-9</div>
<div class="a t" style="right:598px;top:379px;font-size:10px;text-align:right;color:#000;">143</div>
<div class="a t" style="right:563px;top:379px;font-size:10px;text-align:right;color:#000;">1756</div>
<div class="a t" style="left:356.5px;width:60px;top:379px;font-size:10px;text-align:center;color:#000;">1</div>
<div class="a t" style="right:482px;top:379px;font-size:10px;text-align:right;color:#000;">1</div>
<div class="a t" style="left:413.5px;width:60px;top:379px;font-size:10px;text-align:center;color:#000;">09/03/10</div>
<div class="a t" style="left:461.5px;width:60px;top:379px;font-size:10px;text-align:center;color:#000;">09/03/10</div>
<div class="a t" style="left:512.0px;width:60px;top:379px;font-size:10px;text-align:center;color:#000;">09/03/10</div>
<div class="a t" style="right:307px;top:379px;font-size:10px;text-align:right;color:#000;">0</div>
<div class="a t" style="right:240px;top:379px;font-size:10px;text-align:right;color:#000;">283,00</div>
<div class="a t" style="right:172px;top:379px;font-size:10px;text-align:right;color:#000;">283,00</div>
<div class="a t" style="left:734px;top:379px;font-size:10px;color:#000;">P</div>
<div class="a" style="left:106px;top:405px;width:672px;height:1px;background:#EEEAE0;"></div>
<div class="a" style="left:125px;top:391px;width:1px;height:15px;background:#EEEAE0;"></div>
<div class="a" style="left:181px;top:391px;width:1px;height:15px;background:#EEEAE0;"></div>
<div class="a" style="left:241px;top:391px;width:1px;height:15px;background:#EEEAE0;"></div>
<div class="a" style="left:281px;top:391px;width:1px;height:15px;background:#EEEAE0;"></div>
<div class="a" style="left:305px;top:391px;width:1px;height:15px;background:#EEEAE0;"></div>
<div class="a" style="left:340px;top:391px;width:1px;height:15px;background:#EEEAE0;"></div>
<div class="a" style="left:375px;top:391px;width:1px;height:15px;background:#EEEAE0;"></div>
<div class="a" style="left:397px;top:391px;width:1px;height:15px;background:#EEEAE0;"></div>
<div class="a" style="left:421px;top:391px;width:1px;height:15px;background:#EEEAE0;"></div>
<div class="a" style="left:467px;top:391px;width:1px;height:15px;background:#EEEAE0;"></div>
<div class="a" style="left:517px;top:391px;width:1px;height:15px;background:#EEEAE0;"></div>
<div class="a" style="left:568px;top:391px;width:1px;height:15px;background:#EEEAE0;"></div>
<div class="a" style="left:595px;top:391px;width:1px;height:15px;background:#EEEAE0;"></div>
<div class="a" style="left:663px;top:391px;width:1px;height:15px;background:#EEEAE0;"></div>
<div class="a" style="left:730px;top:391px;width:1px;height:15px;background:#EEEAE0;"></div>
<div class="a" style="left:759px;top:391px;width:1px;height:15px;background:#EEEAE0;"></div>
<div class="a" style="left:777px;top:391px;width:1px;height:15px;background:#EEEAE0;"></div>
<div class="a cb" style="left:111px;top:393px;background:#fff;border-color:#8E8E8E"></div>
<div class="a cb" style="left:764px;top:393px;background:#fff;border-color:#8E8E8E"></div>
<div class="a t" style="right:725px;top:394px;font-size:10px;text-align:right;color:#000;">74548-1</div>
<div class="a t" style="right:671px;top:394px;font-size:10px;text-align:right;color:#000;">7198-6</div>
<div class="a t" style="right:622px;top:394px;font-size:10px;text-align:right;color:#000;">1-9</div>
<div class="a t" style="right:598px;top:394px;font-size:10px;text-align:right;color:#000;">143</div>
<div class="a t" style="right:563px;top:394px;font-size:10px;text-align:right;color:#000;">1756</div>
<div class="a t" style="left:356.5px;width:60px;top:394px;font-size:10px;text-align:center;color:#000;">1</div>
<div class="a t" style="right:482px;top:394px;font-size:10px;text-align:right;color:#000;">1</div>
<div class="a t" style="left:413.5px;width:60px;top:394px;font-size:10px;text-align:center;color:#000;">16/03/10</div>
<div class="a t" style="left:461.5px;width:60px;top:394px;font-size:10px;text-align:center;color:#000;">16/03/10</div>
<div class="a t" style="left:512.0px;width:60px;top:394px;font-size:10px;text-align:center;color:#000;">16/03/10</div>
<div class="a t" style="right:307px;top:394px;font-size:10px;text-align:right;color:#000;">0</div>
<div class="a t" style="right:240px;top:394px;font-size:10px;text-align:right;color:#000;">4,52</div>
<div class="a t" style="right:172px;top:394px;font-size:10px;text-align:right;color:#000;">4,52</div>
<div class="a t" style="left:734px;top:394px;font-size:10px;color:#000;">P</div>
<div class="a" style="left:106px;top:420px;width:672px;height:1px;background:#EEEAE0;"></div>
<div class="a" style="left:125px;top:406px;width:1px;height:15px;background:#EEEAE0;"></div>
<div class="a" style="left:181px;top:406px;width:1px;height:15px;background:#EEEAE0;"></div>
<div class="a" style="left:241px;top:406px;width:1px;height:15px;background:#EEEAE0;"></div>
<div class="a" style="left:281px;top:406px;width:1px;height:15px;background:#EEEAE0;"></div>
<div class="a" style="left:305px;top:406px;width:1px;height:15px;background:#EEEAE0;"></div>
<div class="a" style="left:340px;top:406px;width:1px;height:15px;background:#EEEAE0;"></div>
<div class="a" style="left:375px;top:406px;width:1px;height:15px;background:#EEEAE0;"></div>
<div class="a" style="left:397px;top:406px;width:1px;height:15px;background:#EEEAE0;"></div>
<div class="a" style="left:421px;top:406px;width:1px;height:15px;background:#EEEAE0;"></div>
<div class="a" style="left:467px;top:406px;width:1px;height:15px;background:#EEEAE0;"></div>
<div class="a" style="left:517px;top:406px;width:1px;height:15px;background:#EEEAE0;"></div>
<div class="a" style="left:568px;top:406px;width:1px;height:15px;background:#EEEAE0;"></div>
<div class="a" style="left:595px;top:406px;width:1px;height:15px;background:#EEEAE0;"></div>
<div class="a" style="left:663px;top:406px;width:1px;height:15px;background:#EEEAE0;"></div>
<div class="a" style="left:730px;top:406px;width:1px;height:15px;background:#EEEAE0;"></div>
<div class="a" style="left:759px;top:406px;width:1px;height:15px;background:#EEEAE0;"></div>
<div class="a" style="left:777px;top:406px;width:1px;height:15px;background:#EEEAE0;"></div>
<div class="a cb" style="left:111px;top:408px;background:#fff;border-color:#8E8E8E"></div>
<div class="a cb" style="left:764px;top:408px;background:#fff;border-color:#8E8E8E"></div>
<div class="a t" style="right:725px;top:409px;font-size:10px;text-align:right;color:#000;">74549-1</div>
<div class="a t" style="right:671px;top:409px;font-size:10px;text-align:right;color:#000;">7198-6</div>
<div class="a t" style="right:622px;top:409px;font-size:10px;text-align:right;color:#000;">1-9</div>
<div class="a t" style="right:598px;top:409px;font-size:10px;text-align:right;color:#000;">143</div>
<div class="a t" style="right:563px;top:409px;font-size:10px;text-align:right;color:#000;">1756</div>
<div class="a t" style="left:356.5px;width:60px;top:409px;font-size:10px;text-align:center;color:#000;">1</div>
<div class="a t" style="right:482px;top:409px;font-size:10px;text-align:right;color:#000;">1</div>
<div class="a t" style="left:413.5px;width:60px;top:409px;font-size:10px;text-align:center;color:#000;">16/03/10</div>
<div class="a t" style="left:461.5px;width:60px;top:409px;font-size:10px;text-align:center;color:#000;">16/03/10</div>
<div class="a t" style="left:512.0px;width:60px;top:409px;font-size:10px;text-align:center;color:#000;">16/03/10</div>
<div class="a t" style="right:307px;top:409px;font-size:10px;text-align:right;color:#000;">0</div>
<div class="a t" style="right:240px;top:409px;font-size:10px;text-align:right;color:#000;">0,30</div>
<div class="a t" style="right:172px;top:409px;font-size:10px;text-align:right;color:#000;">0,30</div>
<div class="a t" style="left:734px;top:409px;font-size:10px;color:#000;">P</div>
<div class="a" style="left:106px;top:256px;width:672px;height:1px;background:#CFCBBC;"></div>
<div class="a" style="left:778px;top:242px;width:15px;height:178px;background:linear-gradient(90deg,#F3F1EC,#FEFEFB 60%,#F3F1EC)"></div>
<div class="a" style="left:779px;top:242px;width:13px;height:14px;border:1px solid #BCCDF5;border-radius:2px;background:linear-gradient(135deg,#DDE6FE,#C6D5FC 55%,#B4C8F8)"></div>
<svg class="a" style="left:782px;top:246px" width="8" height="6" viewBox="0 0 8 6"><path d="M0.5 5L4 1.5 7.5 5" stroke="#4D6185" stroke-width="2" fill="none"/></svg>
<div class="a" style="left:779px;top:311px;width:13px;height:11px;border:1px solid #BCCDF5;border-radius:2px;background:linear-gradient(135deg,#DDE6FE,#C6D5FC 55%,#B4C8F8)"></div>
<div class="a" style="left:779px;top:407px;width:13px;height:13px;border:1px solid #BCCDF5;border-radius:2px;background:linear-gradient(135deg,#DDE6FE,#C6D5FC 55%,#B4C8F8)"></div>
<svg class="a" style="left:782px;top:412px" width="8" height="6" viewBox="0 0 8 6"><path d="M0.5 1L4 4.5 7.5 1" stroke="#4D6185" stroke-width="2" fill="none"/></svg>
<div class="a" style="left:105px;top:424px;width:688px;height:1px;background:#ACA899;"></div>
<div class="a" style="left:105px;top:424px;width:1px;height:24px;background:#ACA899;"></div>
<div class="a" style="left:106px;top:425px;width:686px;height:1px;background:#716F64;"></div>
<div class="a" style="left:106px;top:425px;width:1px;height:22px;background:#716F64;"></div>
<div class="a" style="left:105px;top:447px;width:688px;height:1px;background:#fff;"></div>
<div class="a" style="left:792px;top:424px;width:1px;height:24px;background:#fff;"></div>
<div class="a" style="left:106px;top:446px;width:686px;height:1px;background:#F1EFE2;"></div>
<div class="a" style="left:791px;top:425px;width:1px;height:22px;background:#F1EFE2;"></div>
<div class="a" style="left:199px;top:426px;width:1px;height:20px;background:#C8C4B8;"></div>
<div class="a" style="left:200px;top:426px;width:87px;height:20px;background:#E7E3E7;"></div>
<div class="a" style="left:287px;top:426px;width:1px;height:20px;background:#C8C4B8;"></div>
<div class="a" style="left:405px;top:426px;width:1px;height:20px;background:#C8C4B8;"></div>
<div class="a" style="left:406px;top:426px;width:127px;height:20px;background:#E7E3E7;"></div>
<div class="a" style="left:533px;top:426px;width:1px;height:20px;background:#C8C4B8;"></div>
<div class="a" style="left:650px;top:426px;width:1px;height:20px;background:#C8C4B8;"></div>
<div class="a" style="left:651px;top:426px;width:140px;height:20px;background:#E7E3E7;"></div>
<div class="a t" style="right:704px;top:432px;font-size:10px;text-align:right;">Qtde.Duplicatas</div>
<div class="a t" style="right:615px;top:432px;font-size:10px;text-align:right;">129</div>
<div class="a t" style="right:498px;top:432px;font-size:10px;text-align:right;">Valor Total Bruto</div>
<div class="a t" style="right:369px;top:432px;font-size:10px;text-align:right;">212.520,39</div>
<div class="a t" style="right:252px;top:432px;font-size:10px;text-align:right;">Valor Total Líquido</div>
<div class="a t" style="right:111px;top:432px;font-size:10px;text-align:right;">31.583,61</div>
<div class="a" style="left:105px;top:449px;width:688px;height:1px;background:#ACA899;"></div>
<div class="a" style="left:105px;top:449px;width:1px;height:23px;background:#ACA899;"></div>
<div class="a" style="left:106px;top:450px;width:686px;height:1px;background:#716F64;"></div>
<div class="a" style="left:106px;top:450px;width:1px;height:21px;background:#716F64;"></div>
<div class="a" style="left:105px;top:471px;width:688px;height:1px;background:#fff;"></div>
<div class="a" style="left:792px;top:449px;width:1px;height:23px;background:#fff;"></div>
<div class="a" style="left:106px;top:470px;width:686px;height:1px;background:#F1EFE2;"></div>
<div class="a" style="left:791px;top:450px;width:1px;height:21px;background:#F1EFE2;"></div>
<div class="a" style="left:199px;top:451px;width:1px;height:19px;background:#C8C4B8;"></div>
<div class="a" style="left:200px;top:451px;width:204px;height:19px;background:#E7E3E7;"></div>
<div class="a" style="left:404px;top:451px;width:1px;height:19px;background:#C8C4B8;"></div>
<div class="a" style="left:533px;top:451px;width:1px;height:19px;background:#C8C4B8;"></div>
<div class="a" style="left:534px;top:451px;width:257px;height:19px;background:#E7E3E7;"></div>
<div class="a t" style="right:704px;top:457px;font-size:10px;text-align:right;">Descrição Agenda</div>
<div class="a t" style="left:203px;top:457px;font-size:10px;letter-spacing:-0.5px;">TRADE</div>
<div class="a t" style="right:369px;top:457px;font-size:10px;text-align:right;">Razão Social Cliente</div>
<div class="a t" style="left:536px;top:457px;font-size:10px;letter-spacing:-0.6px;">NESTLE BRASIL LTDA</div>
<div class="a" style="left:101px;top:481px;width:696px;height:1px;background:#C8C4B4;"></div>
<div class="a" style="left:102px;top:482px;width:694px;height:1px;background:#fff;"></div>
<div class="a" style="left:101px;top:481px;width:1px;height:73px;background:#C8C4B4;"></div>
<div class="a" style="left:102px;top:482px;width:1px;height:71px;background:#fff;"></div>
<div class="a" style="left:796px;top:481px;width:1px;height:73px;background:#C8C4B4;"></div>
<div class="a" style="left:795px;top:482px;width:1px;height:71px;background:#fff;"></div>
<div class="a" style="left:101px;top:553px;width:696px;height:1px;background:#C8C4B4;"></div>
<div class="a" style="left:102px;top:552px;width:694px;height:1px;background:#fff;"></div>
<div class="a" style="left:107px;top:476px;width:32px;height:9px;background:#EEEAE0;"></div>
<div class="a t" style="left:109px;top:475px;font-size:11px;font-weight:bold;color:#B5B1A2;letter-spacing:-0.3px;">Baixa</div>
<div class="a t" style="left:109px;top:488px;font-size:10px;">Motivo de Baixa</div>
<div class="a sk" style="left:108px;top:500px;width:35px;height:17px;background:#fff"></div>
<div class="a t" style="right:761px;top:503px;font-size:10px;text-align:right;">030</div>
<div class="a sk" style="left:145px;top:500px;width:252px;height:18px;background:#fff"></div>
<div class="a rs" style="left:380px;top:502px;width:15px;height:15px;background:#EEEAE0;"></div>
<div class="a arr" style="left:383.5px;top:508px"></div>
<div class="a t" style="left:149px;top:504px;font-size:10px;letter-spacing:-0.55px;">CANCELAMENTO</div>
<div class="a t" style="left:404px;top:488px;font-size:10px;">Tipo Pagto</div>
<div class="a sk" style="left:404px;top:500px;width:134px;height:18px;background:#fff"></div>
<div class="a rs" style="left:521px;top:502px;width:15px;height:15px;background:#EEEAE0;"></div>
<div class="a arr" style="left:524.5px;top:508px"></div>
<div class="a t" style="left:543px;top:488px;font-size:10px;">Portador</div>
<div class="a sk" style="left:542px;top:500px;width:50px;height:18px;background:#fff"></div>
<div class="a t" style="right:311px;top:503px;font-size:10px;text-align:right;">100</div>
<div class="a rs" style="left:592px;top:500px;width:24px;height:19px;background:#EEEAE0;"></div>
<svg class="a" style="left:597px;top:502px" width="14" height="14" viewBox="0 0 14 14">
<rect width="14" height="14" fill="#D2D0D6"/>
<path d="M2 1h3v3h3V1h3v3l2 2v7H9v-3H5v3H0V6l2-2z" fill="#000"/>
<rect x="2" y="7" width="1" height="2" fill="#eee"/><rect x="2" y="11" width="1" height="1" fill="#ddd"/>
<rect x="5" y="7" width="1" height="1" fill="#999"/><rect x="8" y="7" width="1" height="2" fill="#ddd"/><rect x="10" y="11" width="1" height="1" fill="#aaa"/>
<rect x="3" y="1" width="1" height="1" fill="#777"/><rect x="9" y="1" width="1" height="1" fill="#777"/></svg>
<div class="a sk" style="left:616px;top:500px;width:174px;height:18px;background:#E7E3E7"></div>
<div class="a t" style="left:617px;top:503px;font-size:10px;letter-spacing:-0.4px;">PORTADOR PADRAO</div>
<div class="a t" style="left:663px;top:487px;font-size:10px;">Enviar Baixa para Banco</div>
<div class="a sk" style="left:779px;top:485px;width:12px;height:12px;background:#fff"></div>
<svg class="a" style="left:779px;top:485px" width="12" height="12" viewBox="0 0 12 12"><path d="M3 5.5L5 8 9 3" stroke="#000" stroke-width="2" fill="none"/></svg>
<div class="a t" style="left:109px;top:522px;font-size:10px;">Data Pgto.</div>
<div class="a sk" style="left:108px;top:532px;width:58px;height:17px;background:#fff"></div>
<div class="a t" style="left:111px;top:535px;font-size:10px;">02/07/10</div>
<div class="a t" style="left:172px;top:522px;font-size:10px;">Data Crédito</div>
<div class="a sk" style="left:171px;top:532px;width:59px;height:17px;background:#fff"></div>
<div class="a t" style="left:174px;top:535px;font-size:10px;">02/07/10</div>
<div class="a t" style="left:235px;top:522px;font-size:10px;">Documento</div>
<div class="a sk" style="left:235px;top:532px;width:96px;height:17px;background:#fff"></div>
<div class="a t" style="left:238px;top:535px;font-size:10px;">002</div>
<div class="a t" style="left:337px;top:522px;font-size:10px;">Vencto</div>
<div class="a sk" style="left:336px;top:532px;width:59px;height:17px;background:#fff"></div>
<div class="a t" style="left:339px;top:535px;font-size:10px;">02/08/10</div>
<div class="a t" style="left:404px;top:522px;font-size:10px;">Desconto</div>
<div class="a sk" style="left:403px;top:532px;width:93px;height:17px;background:#fff"></div>
<div class="a t" style="right:407px;top:535px;font-size:10px;text-align:right;">0,00</div>
<div class="a t" style="left:501px;top:522px;font-size:10px;">Abatimento</div>
<div class="a sk" style="left:500px;top:532px;width:93px;height:17px;background:#fff"></div>
<div class="a t" style="right:310px;top:535px;font-size:10px;text-align:right;">0,00</div>
<div class="a t" style="left:598px;top:522px;font-size:10px;">Juros</div>
<div class="a sk" style="left:597px;top:532px;width:93px;height:17px;background:#fff"></div>
<div class="a t" style="right:213px;top:535px;font-size:10px;text-align:right;">0,00</div>
<div class="a t" style="left:695px;top:522px;font-size:10px;">Valor Pagamento</div>
<div class="a sk" style="left:694px;top:532px;width:96px;height:17px;background:#fff"></div>
<div class="a t" style="right:113px;top:535px;font-size:10px;text-align:right;">1000,00</div>
<div class="a" style="left:0px;top:628px;width:414px;height:1px;background:#B4B0A0;"></div>
<div class="a" style="left:0px;top:628px;width:1px;height:20px;background:#B4B0A0;"></div>
<div class="a" style="left:0px;top:647px;width:414px;height:1px;background:#fff;"></div>
<div class="a" style="left:413px;top:628px;width:1px;height:20px;background:#fff;"></div>
<div class="a" style="left:417px;top:628px;width:74px;height:1px;background:#B4B0A0;"></div>
<div class="a" style="left:417px;top:628px;width:1px;height:20px;background:#B4B0A0;"></div>
<div class="a" style="left:417px;top:647px;width:74px;height:1px;background:#fff;"></div>
<div class="a" style="left:490px;top:628px;width:1px;height:20px;background:#fff;"></div>
<div class="a t" style="left:417.0px;width:74px;top:633px;font-size:10px;text-align:center;color:#000;letter-spacing:-0.4px;">RMS</div>
<div class="a" style="left:494px;top:628px;width:36px;height:1px;background:#B4B0A0;"></div>
<div class="a" style="left:494px;top:628px;width:1px;height:20px;background:#B4B0A0;"></div>
<div class="a" style="left:494px;top:647px;width:36px;height:1px;background:#fff;"></div>
<div class="a" style="left:529px;top:628px;width:1px;height:20px;background:#fff;"></div>
<div class="a t" style="left:494.0px;width:36px;top:633px;font-size:10px;text-align:center;color:#000;">1-9</div>
<div class="a" style="left:533px;top:628px;width:74px;height:1px;background:#B4B0A0;"></div>
<div class="a" style="left:533px;top:628px;width:1px;height:20px;background:#B4B0A0;"></div>
<div class="a" style="left:533px;top:647px;width:74px;height:1px;background:#fff;"></div>
<div class="a" style="left:606px;top:628px;width:1px;height:20px;background:#fff;"></div>
<div class="a t" style="left:533.0px;width:74px;top:633px;font-size:10px;text-align:center;color:#000;letter-spacing:-0.5px;">VARMONLI</div>
<div class="a" style="left:610px;top:628px;width:44px;height:1px;background:#B4B0A0;"></div>
<div class="a" style="left:610px;top:628px;width:1px;height:20px;background:#B4B0A0;"></div>
<div class="a" style="left:610px;top:647px;width:44px;height:1px;background:#fff;"></div>
<div class="a" style="left:653px;top:628px;width:1px;height:20px;background:#fff;"></div>
<div class="a t" style="left:610.0px;width:44px;top:633px;font-size:10px;text-align:center;color:#000;">5.67.44</div>
<div class="a" style="left:657px;top:628px;width:69px;height:1px;background:#B4B0A0;"></div>
<div class="a" style="left:657px;top:628px;width:1px;height:20px;background:#B4B0A0;"></div>
<div class="a" style="left:657px;top:647px;width:69px;height:1px;background:#fff;"></div>
<div class="a" style="left:725px;top:628px;width:1px;height:20px;background:#fff;"></div>
<div class="a t" style="left:657.0px;width:69px;top:633px;font-size:10px;text-align:center;color:#000;">Consulta</div>
<div class="a" style="left:729px;top:628px;width:11px;height:1px;background:#B4B0A0;"></div>
<div class="a" style="left:729px;top:628px;width:1px;height:20px;background:#B4B0A0;"></div>
<div class="a" style="left:729px;top:647px;width:11px;height:1px;background:#fff;"></div>
<div class="a" style="left:739px;top:628px;width:1px;height:20px;background:#fff;"></div>
<div class="a t" style="left:729.0px;width:11px;top:633px;font-size:10px;text-align:center;color:#000;">L</div>
<div class="a" style="left:743px;top:628px;width:31px;height:1px;background:#B4B0A0;"></div>
<div class="a" style="left:743px;top:628px;width:1px;height:20px;background:#B4B0A0;"></div>
<div class="a" style="left:743px;top:647px;width:31px;height:1px;background:#fff;"></div>
<div class="a" style="left:773px;top:628px;width:1px;height:20px;background:#fff;"></div>
<div class="a t" style="left:743.0px;width:31px;top:633px;font-size:10px;text-align:center;color:#ACA899;letter-spacing:-0.4px;">CAPS</div>
<div class="a" style="left:776px;top:628px;width:29px;height:1px;background:#B4B0A0;"></div>
<div class="a" style="left:776px;top:628px;width:1px;height:20px;background:#B4B0A0;"></div>
<div class="a" style="left:776px;top:647px;width:29px;height:1px;background:#fff;"></div>
<div class="a" style="left:804px;top:628px;width:1px;height:20px;background:#fff;"></div>
<div class="a t" style="left:776.0px;width:29px;top:633px;font-size:10px;text-align:center;color:#000;letter-spacing:-0.5px;">NUM</div>
<div class="a" style="left:808px;top:628px;width:74px;height:1px;background:#B4B0A0;"></div>
<div class="a" style="left:808px;top:628px;width:1px;height:20px;background:#B4B0A0;"></div>
<div class="a" style="left:808px;top:647px;width:74px;height:1px;background:#fff;"></div>
<div class="a" style="left:881px;top:628px;width:1px;height:20px;background:#fff;"></div>
<div class="a t" style="left:808.0px;width:74px;top:633px;font-size:10px;text-align:center;color:#000;">2/7/2010</div>
<div class="a" style="left:0px;top:648px;width:900px;height:4px;background:#3C86EE;"></div>
<div class="a" style="left:0px;top:648px;width:900px;height:1px;background:#2A66D6;"></div>
<div class="a" style="left:803px;top:648px;width:97px;height:4px;background:#1290EE;"></div>
<div class="a" style="left:803px;top:648px;width:97px;height:1px;background:#0A78D8;"></div>
<div class="a" style="left:0;top:648px;width:94px;height:4px;background:#6CB46A;clip-path:polygon(0 0,92px 0,94px 4px,0 4px)"></div>
<div class="a" style="left:0px;top:648px;width:92px;height:1px;background:#3C8C3C;"></div>
<svg class="a" style="left:0;top:0" width="900" height="652"><ellipse cx="767" cy="203.6" rx="40.6" ry="48" transform="rotate(2 767 203.6)" fill="none" stroke="#E8141E" stroke-width="2.8"/></svg>
</div>
</body></html>
